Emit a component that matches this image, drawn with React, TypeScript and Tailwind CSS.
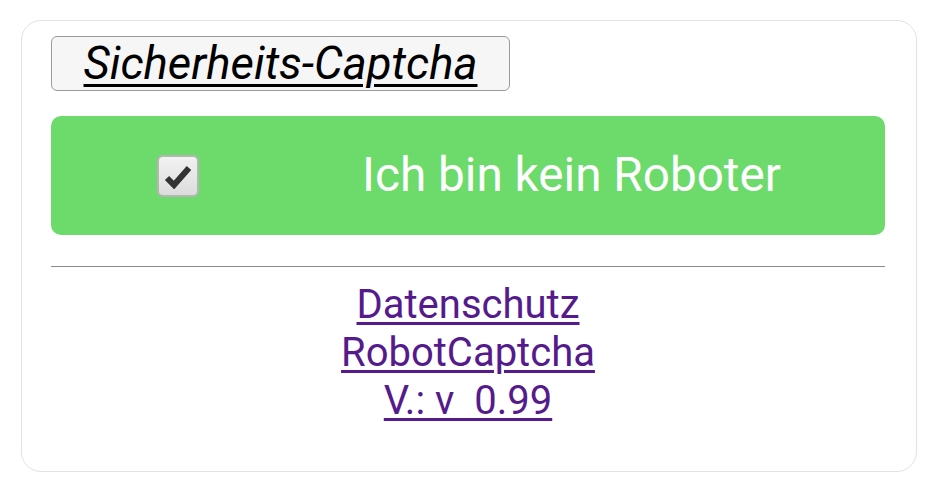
import React from 'react';

const CheckMark = () => (
  <div className="w-[42px] h-[42px] rounded-[6px] border-2 border-[#b5b5b5] bg-gradient-to-b from-[#f2f2f2] to-[#dcdcdc] flex items-center justify-center shrink-0">
    <svg width="28" height="26" viewBox="0 0 28 26">
      <path d="M3 15 L10 22 L25 5" fill="none" stroke="#333333" strokeWidth="6" strokeLinecap="butt" strokeLinejoin="miter" />
    </svg>
  </div>
);

export default function App() {
  return (
    <div className="w-[934px] h-[488px] bg-white font-['Roboto','Liberation_Sans',sans-serif] pt-[20px] pl-[21px]">
      <div className="w-[896px] h-[452px] border border-[#e2e2e2] rounded-[20px] px-[29px] pt-[15px]">
        {/* Title badge */}
        <div className="w-[459px] h-[55px] border border-[#9a9a9a] rounded-[6px] bg-[#f6f6f6] flex items-center justify-center">
          <span className="italic underline text-[45.5px] leading-none text-black decoration-[3px] underline-offset-[5px]">Sicherheits-Captcha</span>
        </div>

        {/* Captcha button */}
        <div className="mt-[25px] w-[834px] h-[119px] rounded-[10px] bg-[#6cdb6c] flex items-center pl-[106px]">
          <CheckMark />
          <span className="ml-[163px] text-white text-[47.7px] leading-none">Ich bin kein Roboter</span>
        </div>

        <div className="mt-[31px] w-[834px] h-px bg-[#8a8a8a]" />

        {/* Links */}
        <div className="w-[834px] flex flex-col items-center mt-[14px] text-[40px] leading-[48px] text-[#551a8b]">
          <a className="underline decoration-[3px] underline-offset-[4px]">Datenschutz</a>
          <a className="underline decoration-[3px] underline-offset-[4px]">RobotCaptcha</a>
          <a className="underline decoration-[3px] underline-offset-[4px] whitespace-pre">V.: v  0.99</a>
        </div>
      </div>
    </div>
  );
}
